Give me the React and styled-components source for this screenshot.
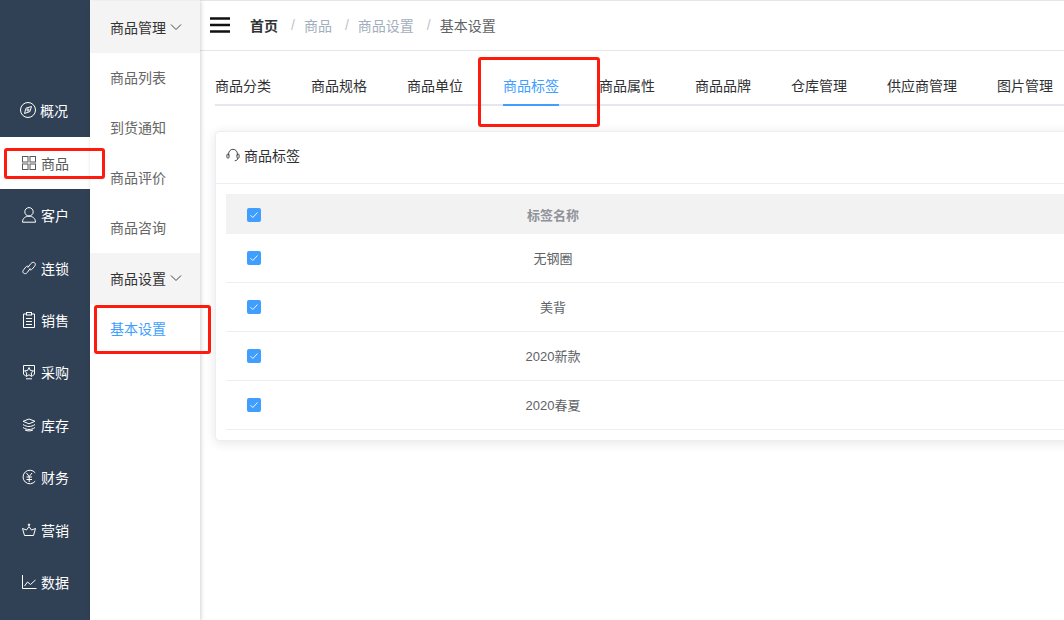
import React from "react";
import styled, { createGlobalStyle } from "styled-components";

const Global = createGlobalStyle`
  html, body { margin: 0; padding: 0; background: #fff; }
  body { font-family: "Liberation Sans", "Noto Sans CJK SC", sans-serif; }
  * { box-sizing: border-box; }
`;

const Page = styled.div`
  position: relative;
  width: 1064px;
  height: 620px;
  overflow: hidden;
  display: flex;
  background: #fff;
`;

const Rail = styled.nav`
  flex: 0 0 90px;
  height: 620px;
  background: #304156;
  padding-top: 84.2px;
  display: flex;
  flex-direction: column;
`;

const RailItem = styled.div`
  height: 52.4px;
  flex: 0 0 52.4px;
  display: flex;
  align-items: center;
  padding-left: ${(p) => (p.$wide ? "20px" : "21px")};
  gap: 4px;
  font-size: 14px;
  color: ${(p) => (p.$active ? "#595959" : "#fff")};
  background: ${(p) => (p.$active ? "#fff" : "transparent")};
  svg { flex: 0 0 16px; }
`;

const SubNav = styled.aside`
  flex: 0 0 110px;
  height: 620px;
  background: #fff;
  box-shadow: 1px 0 4px rgba(0, 0, 0, 0.18);
  position: relative;
  z-index: 1;
  margin-top: 1px;
`;

const SubHead = styled.div`
  height: ${(p) => (p.$short ? "51px" : "52px")};
  background: #f4f4f4;
  display: flex;
  align-items: center;
  padding: 0 0 ${(p) => (p.$short ? "1px" : "0")} 20px;
  gap: 4px;
  font-size: 14px;
  color: #333;
`;

const SubLink = styled.div`
  height: 50px;
  display: flex;
  align-items: center;
  padding: 0 0 2px 20px;
  font-size: 14px;
  color: ${(p) => (p.$active ? "#409eff" : "#666")};
`;

const Main = styled.main`
  flex: 1;
  min-width: 0;
  height: 620px;
  overflow: hidden;
`;

const TopBar = styled.header`
  height: 51px;
  border-top: 1px solid #e6e6e6;
  border-bottom: 1px solid #e6e6e6;
  display: flex;
  align-items: center;
  padding: 0 0 2px 10px;
`;

const Burger = styled.svg`
  width: 20px;
  height: 16px;
  margin-right: 20px;
  flex: 0 0 20px;
`;

const Crumb = styled.span`
  font-size: 14px;
  font-weight: ${(p) => (p.$strong ? 700 : 400)};
  color: ${(p) => (p.$strong ? "#303133" : p.$current ? "#606266" : "#a3aebd")};
`;

const Sep = styled.span`
  font-size: 14px;
  color: #c0c4cc;
  margin: 0 9px 0 13px;
`;

const Tabs = styled.div`
  margin: 21px 0 0 15px;
  height: 34px;
  border-bottom: 2px solid #e4e7ed;
  display: flex;
  gap: 40px;
  white-space: nowrap;
`;

const Tab = styled.div`
  height: 34px;
  line-height: 28px;
  font-size: 14px;
  flex: 0 0 auto;
  color: ${(p) => (p.$active ? "#409eff" : "#303133")};
  border-bottom: 2px solid ${(p) => (p.$active ? "#409eff" : "transparent")};
`;

const Card = styled.section`
  margin: 25px 0 0 15px;
  width: 900px;
  height: 310px;
  background: #fff;
  border: 1px solid #ebeef5;
  border-radius: 4px;
  box-shadow: 0 2px 12px rgba(0, 0, 0, 0.1);
`;

const CardHead = styled.div`
  height: 52px;
  border-bottom: 1px solid #ebeef5;
  display: flex;
  align-items: center;
  padding: 0 0 5px 10px;
  gap: 4px;
  font-size: 14px;
  color: #303133;
`;

const Table = styled.div`
  margin: 10px 0 0 10px;
`;

const Row = styled.div`
  display: grid;
  grid-template-columns: 56px 542px 1fr;
  align-items: center;
  height: ${(p) => (p.$head ? "40px" : "49px")};
  background: ${(p) => (p.$head ? "#f2f2f2" : "#fff")};
  border-bottom: ${(p) => (p.$head ? "none" : "1px solid #ebeef5")};
  font-size: 13px;
  font-weight: ${(p) => (p.$head ? 700 : 400)};
  color: ${(p) => (p.$head ? "#909399" : "#606266")};
`;

const CheckCell = styled.div`
  display: flex;
  justify-content: center;
  padding-top: ${(p) => (p.$head ? "2px" : "0")};
`;

const Check = styled.span`
  width: 14px;
  height: 14px;
  border-radius: 2px;
  background: #409eff;
  display: flex;
  align-items: center;
  justify-content: center;
`;

const NameCell = styled.div`
  text-align: center;
  padding-bottom: ${(p) => (p.$head ? "0" : "2px")};
`;

const Mark = styled.div`
  position: absolute;
  border: 3px solid #ff1a0e;
  border-radius: 3px;
  z-index: 5;
  pointer-events: none;
`;

const MarkNav = styled(Mark)`
  left: 4px;
  top: 148px;
  width: 101px;
  height: 31px;
`;

const MarkSub = styled(Mark)`
  left: 94px;
  top: 305px;
  width: 117px;
  height: 49px;
`;

const MarkTab = styled(Mark)`
  left: 478px;
  top: 57px;
  width: 122px;
  height: 70px;
`;

const Ic = ({ children, size = 16 }) => (
  <svg width={size} height={size} viewBox="0 0 16 16" fill="none" stroke="currentColor" strokeWidth="1">
    {children}
  </svg>
);

const icons = {
  compass: (
    <Ic>
      <circle cx="8" cy="8" r="7.500" />
      <path d="M11.500 4.500l-1.500 5-5.500 2 1.500-5.300z" />
      <circle cx="8" cy="8" r="1.100" />
    </Ic>
  ),
  grid: (
    <Ic>
      <rect x="1.500" y="1.500" width="5.500" height="5.500" />
      <rect x="9" y="1.500" width="5.500" height="5.500" />
      <rect x="1.500" y="9" width="5.500" height="5.500" />
      <rect x="9" y="9" width="5.500" height="5.500" />
    </Ic>
  ),
  user: (
    <Ic>
      <circle cx="8" cy="4.800" r="4.200" />
      <path d="M1.500 15.200c0-3.800 2.800-6 6.500-6s6.500 2.200 6.500 6z" />
    </Ic>
  ),
  link: (
    <Ic>
      <path d="M6.700 7.700l3.200-4.200c1.100-1.300 2.700-1.500 3.700-.7s1 2.200 0 3.400l-2.200 2.700c-.9 1-2 1.200-2.900.6" />
      <path d="M9.300 8.300l-3 4.200c-1 1.300-2.700 1.500-3.700.7s-1-2.200 0-3.400l2.100-2.700c.9-1 2-1.200 2.900-.6" />
    </Ic>
  ),
  clip: (
    <Ic>
      <path d="M5.500 2H2.500v13.500h11V2h-3" />
      <rect x="5.500" y=".5" width="5" height="2.500" />
      <path d="M5 6.500h6M5 9.500h6M5 12.500h6" />
    </Ic>
  ),
  badge: (
    <Ic>
      <path d="M4.500 12L2.500 10V1.500h11V10l-2 2" />
      <path d="M8 3.500l1.400 3 3.100.4-2.300 2.100.7 3.500L8 10.800l-2.900 1.700.7-3.500-2.300-2.100 3.100-.4z" />
      <path d="M5 14.800h6" />
    </Ic>
  ),
  layers: (
    <Ic>
      <path d="M8 2l6 2.300-6 2.500-6-2.500z" />
      <path d="M2 7.500c2 1.300 4 2 6 2s4-.7 6-2" />
      <path d="M2 10.500c2 1.300 4 2 6 2s4-.7 6-2" />
      <path d="M4 13c1.300.6 2.700.9 4 .9s2.700-.3 4-.9" />
    </Ic>
  ),
  yuan: (
    <Ic>
      <path d="M14.200 3.800A6.800 6.800 0 1 0 14.200 12.200" />
      <path d="M5.500 4l2.700 3.500L11 4M8.200 7.500V13M5.500 8h5.500M5.500 10.500h5.500" />
    </Ic>
  ),
  crown: (
    <Ic>
      <path d="M1.500 6.500l4 1.500L8 4.500l2.500 3.500 4-1.500-2 7H3.500z" />
      <circle cx="8" cy="2.800" r=".8" fill="currentColor" />
    </Ic>
  ),
  chart: (
    <Ic>
      <path d="M1.500 1v13.500h14" />
      <path d="M3.500 12l3-4 3 2.500L14.500 6" />
    </Ic>
  ),
};

const rail = [
  ["compass", "概况"],
  ["grid", "商品", true],
  ["user", "客户"],
  ["link", "连锁"],
  ["clip", "销售"],
  ["badge", "采购"],
  ["layers", "库存"],
  ["yuan", "财务"],
  ["crown", "营销"],
  ["chart", "数据"],
];

const Chevron = () => (
  <svg width="12" height="12" viewBox="0 0 12 12" fill="none" stroke="#444" strokeWidth="1">
    <path d="M1 3.500l5 5 5-5" />
  </svg>
);

const Headset = () => (
  <Ic size={14}>
    <path d="M3 8.500V6.500a5 5 0 0 1 10 0v2" />
    <rect x="1" y="7" width="2.500" height="4.500" rx="1" />
    <rect x="12.500" y="7" width="2.500" height="4.500" rx="1" />
    <path d="M13.500 11.500c0 2-1.500 3-3.500 3" />
  </Ic>
);

const Tick = () => (
  <svg width="10" height="10" viewBox="0 0 10 10" fill="none" stroke="#fff" strokeWidth=".9">
    <path d="M1.500 5.200l2.300 2.300 4.700-5" />
  </svg>
);

const tabs = ["商品分类", "商品规格", "商品单位", "商品标签", "商品属性", "商品品牌", "仓库管理", "供应商管理", "图片管理"];
const rows = ["无钢圈", "美背", "2020新款", "2020春夏"];

export default function App() {
  return (
    <Page>
      <Global />
      <Rail>
        {rail.map(([icon, label, active]) => (
          <RailItem key={label} $active={active} $wide={icon === "compass"}>
            {icons[icon]}
            {label}
          </RailItem>
        ))}
      </Rail>
      <SubNav>
        <SubHead>
          商品管理
          <Chevron />
        </SubHead>
        <SubLink>商品列表</SubLink>
        <SubLink>到货通知</SubLink>
        <SubLink>商品评价</SubLink>
        <SubLink>商品咨询</SubLink>
        <SubHead $short>
          商品设置
          <Chevron />
        </SubHead>
        <SubLink $active>基本设置</SubLink>
      </SubNav>
      <Main>
        <TopBar>
          <Burger viewBox="0 0 20 16" stroke="#111" strokeWidth="2.400">
            <path d="M0 1.500h20M0 8h20M0 14.500h20" />
          </Burger>
          <Crumb $strong>首页</Crumb>
          <Sep>/</Sep>
          <Crumb>商品</Crumb>
          <Sep>/</Sep>
          <Crumb>商品设置</Crumb>
          <Sep>/</Sep>
          <Crumb $current>基本设置</Crumb>
        </TopBar>
        <Tabs>
          {tabs.map((t) => (
            <Tab key={t} $active={t === "商品标签"}>
              {t}
            </Tab>
          ))}
        </Tabs>
        <Card>
          <CardHead>
            <Headset />
            商品标签
          </CardHead>
          <Table>
            <Row $head>
              <CheckCell $head>
                <Check>
                  <Tick />
                </Check>
              </CheckCell>
              <NameCell $head>标签名称</NameCell>
            </Row>
            {rows.map((r) => (
              <Row key={r}>
                <CheckCell>
                  <Check>
                    <Tick />
                  </Check>
                </CheckCell>
                <NameCell>{r}</NameCell>
              </Row>
            ))}
          </Table>
        </Card>
      </Main>
      <MarkNav />
      <MarkSub />
      <MarkTab />
    </Page>
  );
}
